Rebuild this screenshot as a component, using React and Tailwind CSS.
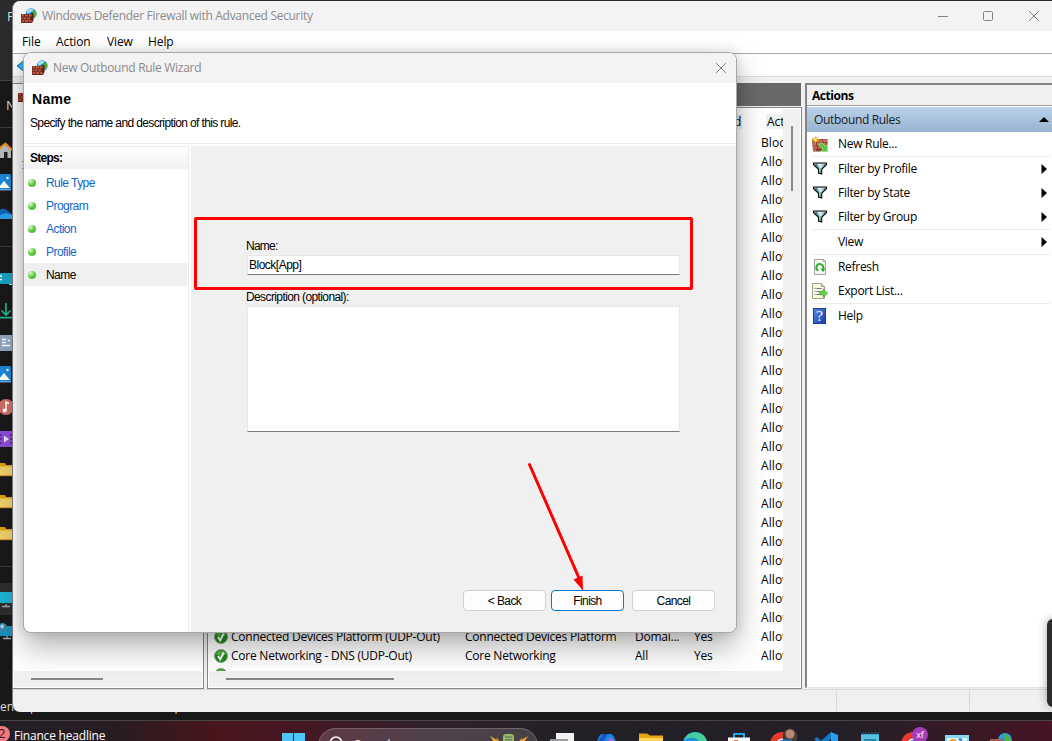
import React from 'react';

const STEPS = ['Rule Type', 'Program', 'Action', 'Profile', 'Name'];

const MENU = [
  { label: 'File', cls: 'w-[34px]' },
  { label: 'Action', cls: 'w-[51px]' },
  { label: 'View', cls: 'w-[41px]' },
  { label: 'Help', cls: 'w-[40px]' },
];

// rows hidden behind the wizard only show their action column
const RULES = Array.from({ length: 29 }, (_, i) => ({
  name: i === 26 ? 'Connected Devices Platform (UDP-Out)' : i === 27 ? 'Core Networking - DNS (UDP-Out)' : '',
  group: i === 26 ? 'Connected Devices Platform' : i === 27 ? 'Core Networking' : '',
  profile: i === 26 ? 'Domai...' : i === 27 ? 'All' : '',
  enabled: i === 26 || i === 27 ? 'Yes' : '',
  action: i === 0 ? 'Block' : i === 28 ? '' : 'Allow',
  check: i > 25,
}));

function FirewallIcon({ className = 'w-4 h-4' }) {
  return (
    <svg className={className} viewBox="0 0 16 16">
      <circle cx="10.200" cy="5.500" r="5.300" fill="#1a86dc" />
      <path d="M6 2.800C7.500.8 10 .2 12.500 1l-.8 2-2 1L8 5.500l-2-.5z" fill="#9fe3f7" />
      <path d="M11.500 2.500l2.500-.3 1.300 2.500v2.500l-2 2.500-1.800-2.500z" fill="#4cae35" />
      <path d="M0 6h9.500l1-1h2v7L11 15H0z" fill="#5e2016" />
      <path d="M.5 6.300h2.800v2.200H.5zM4 6.300h3v2.200H4zM7.700 6.300h3v2.200h-3zM.5 9.200h1.300v2.200H.5zM2.500 9.200h3v2.200h-3zM6.200 9.200h3v2.200h-3zM.5 12.100h2.800v2.200H.5zM4 12.100h3v2.200H4zM7.700 12.100h3v2.200h-3z" fill="#b4543c" />
    </svg>
  );
}

function FilterIcon() {
  return (
    <svg className="w-4 h-4" viewBox="0 0 16 16">
      <path d="M1.500 2h13v1.500L9.700 8.300V13L6.500 12V8.300L1.500 3.500z" fill="#c9cccc" stroke="#000" strokeWidth="1.1" />
      <path d="M2.500 3h4.500l2 5v4l-1.500-.5V8z" fill="#0e8a8a" />
      <path d="M5 3h5.500L8.500 7.500v3.500l-1-.5V7.500z" fill="#dfe3e3" />
      <path d="M12.500 3h1.300L9.500 7.500z" fill="#0e8a8a" />
    </svg>
  );
}

function NewRuleIcon() {
  return (
    <svg className="w-4 h-4" viewBox="0 0 16 16">
      <path d="M0 3h15.500v12.500H1z" fill="#8a3f2f" />
      <path d="M6 3.500h4v2.500H6zM11 3.500h4v2.500h-4zM1 7h3v2.500H1zM5 7h4v2.500H5zM10 7h4v2.500h-4zM1 10.500h4v2H1zM6 10.500h3v2H6zM1 13.300h3v1.700H1z" fill="#c4745c" />
      <path d="M3.500 0l.8 2 2-.9-.9 2 2.100.8-2.100.8.9 2-2-.9-.8 2-.8-2-2 .9.900-2L-.5 3.900l2.100-.8-.9-2 2 .9z" fill="#f9b21b" />
      <circle cx="3.500" cy="3.800" r="1.200" fill="#fff2a0" />
      <path d="M6.500 8.500l3-2 3.700 3.700 2.300-1.700v7H8.500l2.300-2.300z" fill="#58c93f" stroke="#b6ec9e" strokeWidth=".7" />
    </svg>
  );
}

function RefreshIcon() {
  return (
    <svg className="w-4 h-4" viewBox="0 0 16 16">
      <path d="M2.500.5h9l2 2v13h-11z" fill="#f7f7f4" stroke="#a0a49c" />
      <path d="M11.500.5v2h2" fill="none" stroke="#a0a49c" />
      <path d="M6.300 11.700A3.500 3.500 0 1 1 11.300 9v1.500" fill="none" stroke="#2fae2c" strokeWidth="1.900" />
      <path d="M8.500 9.500h5l-2.500 3.700z" fill="#2fae2c" />
    </svg>
  );
}

function ExportIcon() {
  return (
    <svg className="w-4 h-4" viewBox="0 0 16 16">
      <path d="M.5.500h9l3 3v12H.5z" fill="#fbf8e4" stroke="#a39f86" />
      <path d="M9.500.500v3h3" fill="#e3dfc5" stroke="#a39f86" />
      <path d="M2.500 5.500h1m-1 3h1m-1 3h1M4.500 5.500h5m-5 3h3m-3 3h3" stroke="#6b6a88" />
      <path d="M7.500 8.300h3.500V5.700l4.700 4.500-4.700 4.300v-2.600H7.500z" fill="#6ad149" stroke="#3a9d27" strokeWidth=".6" />
    </svg>
  );
}

function HelpIcon() {
  return (
    <span className="w-[13px] h-4 ml-px bg-linear-to-br from-[#5a87e0] to-[#1d3fa8] border border-[#1b3a93] text-white text-[15px] leading-[14px] text-center font-['Liberation_Serif',serif]">?</span>
  );
}

function CheckIcon() {
  return (
    <svg className="w-3.5 h-3.5" viewBox="0 0 14 14">
      <circle cx="7" cy="7" r="6.500" fill="#1f8c1a" stroke="#8a9a86" strokeWidth=".8" />
      <path d="M2 5a5.300 5.300 0 0 1 10 0c-3 2-7 2-10 0z" fill="#4fb53c" />
      <path d="M4 7l2.200 3.300L9.800 3.500" fill="none" stroke="#fff" strokeWidth="1.900" />
    </svg>
  );
}

const ACTIONS = [
  { label: 'New Rule...', icon: <NewRuleIcon />, sep: true },
  { label: 'Filter by Profile', icon: <FilterIcon />, more: true },
  { label: 'Filter by State', icon: <FilterIcon />, more: true },
  { label: 'Filter by Group', icon: <FilterIcon />, more: true, sep: true },
  { label: 'View', more: true, sep: true },
  { label: 'Refresh', icon: <RefreshIcon /> },
  { label: 'Export List...', icon: <ExportIcon />, sep: true },
  { label: 'Help', icon: <HelpIcon /> },
];

// sliver of the explorer sidebar, only the right part of each icon shows
const picture = (
  <>
    <rect x="-4" y="7" width="15" height="16" rx="1" fill="#1b86d8" />
    <path d="M-2 21l6-7 6 7z" fill="#fff" />
    <circle cx="7.500" cy="11" r="1.200" fill="#fff" />
    <rect x="-2" y="22" width="13" height="1.500" fill="#6aa5dc" />
  </>
);
const folder = (
  <>
    <path d="M-4 8h9l1 2h7v11H-4z" fill="#e0a010" />
    <path d="M-4 11.500h16V21H-4z" fill="#edcd6a" />
    <path d="M-4 20.200h16v1H-4z" fill="#c89420" />
  </>
);
const divider = <path d="M0 15.500h12" stroke="#3a3a3a" />;
const SIDEBAR = [
  <>
    <path d="M-1 14l6-5 6 5v9H-1z" fill="#b9b9b9" />
    <path d="M4 17h3.500v6H4z" fill="#222" />
    <path d="M-2 14.500L5.500 8.500l6.500 6.500" fill="none" stroke="#f08a1c" strokeWidth="2" />
  </>,
  picture,
  <>
    <path d="M-2 13a6 6 0 0 1 10-1l4 3v4H-2z" fill="#0f63b8" />
    <path d="M-2 17l8-3 6 2v4H-2z" fill="#28a0ea" />
  </>,
  divider,
  <>
    <rect x="-2" y="10" width="14" height="11" fill="#1ba0bf" />
    <path d="M0 13h2m-2 3.500h2" stroke="#fff" strokeWidth="1.500" />
    <path d="M9 21.500h3" stroke="#9fe1ee" />
  </>,
  <path d="M6 8v12M1.500 15.500L6 20l4.500-4.500M0 22.700h12" fill="none" stroke="#22b58a" strokeWidth="1.700" />,
  <>
    <rect x="-2" y="8" width="14" height="16" fill="#8fa4bd" />
    <path d="M2 12.500h4m-4 3h4m-4 3h8M7.500 13.500H10" stroke="#fff" strokeWidth="1.500" />
  </>,
  picture,
  <>
    <circle cx="6" cy="16" r="8" fill="#cf6a62" />
    <path d="M6 19.500V11l3 1.500" fill="none" stroke="#fff" strokeWidth="1.500" />
    <circle cx="4.700" cy="19.500" r="2" fill="#fff" />
  </>,
  <>
    <rect x="-2" y="8" width="14" height="16" fill="#8c4bd8" />
    <path d="M0 12h1.500m-1.500 4h1.500m-1.500 4h1.500m8.500-8h2m-2 4h2m-2 4h2" stroke="#40206e" strokeWidth="1.500" />
    <path d="M4 12.500v7l5-3.500z" fill="#e8e0f4" />
  </>,
  folder,
  folder,
  folder,
  divider,
  <>
    <rect x="-1" y="0" width="14" height="32" fill="#2d2d2d" />
    <rect x="-2" y="9" width="14" height="11" fill="#1fb0d2" />
    <path d="M6 21v2M2 23.500h8" stroke="#9aa4ac" strokeWidth="1.300" />
  </>,
  <>
    <rect x="-1" y="11" width="13" height="10" fill="#1790bd" />
    <circle cx="2.500" cy="12.500" r="4.500" fill="#3c82a8" />
    <path d="M0 11l3-2 1 3-2 2z" fill="#a4d5e8" />
    <path d="M7 21v2M3 23.500h8" stroke="#9aa4ac" strokeWidth="1.300" />
  </>,
];

const chrome = (
  <>
    <circle cx="12" cy="12" r="12" fill="#e33b2e" />
    <path d="M0 9a12 12 0 0 0 8 14l4-8z" fill="#2f9e44" />
    <circle cx="12" cy="12" r="5.500" fill="#fff" />
    <circle cx="12" cy="12" r="4.300" fill="#3b7de8" />
  </>
);
const TASKBAR = [
  <><rect x="4" y="1" width="18" height="16" fill="#f2f2f2" /><rect x="-2" y="7" width="18" height="14" fill="#9a9a9a" /></>,
  <><path d="M0 14C2 5 4 2 7 2h7c4 0 5 5 8 14z" fill="#1b87e0" /><path d="M12 6c5 0 8 3 10 8l-8-2z" fill="#b066e6" /><path d="M2 9h6l4-7h-5z" fill="#1557c8" /></>,
  <><path d="M0 1.500h8l3 2h13V22H0z" fill="#e9a510" /><path d="M0 6h24v14H0z" fill="#ffd55e" /></>,
  <><circle cx="12" cy="12.500" r="12.500" fill="#1b8fd8" /><path d="M1 8C5-2 20-3 24 9l-6 4C15 4 8 5 1 8z" fill="#47cf9b" /></>,
  <><path d="M7 6V2h10v4" fill="none" stroke="#22a5ea" strokeWidth="2" /><rect x="1" y="5.500" width="22" height="16" fill="#f7f9fb" /><path d="M7 8h4v3H7z" fill="#e85b3b" /></>,
  <>{chrome}<circle cx="20" cy="4" r="7.500" fill="#4a3b38" /><circle cx="20" cy="2" r="4.500" fill="#b98a73" /><path d="M13 7h9v6h-9z" fill="#1b6b96" /></>,
  <><path d="M17 0l7 3v20l-7-3z" fill="#2a9df0" /><path d="M0 7l3-2 14 13v5zM17 0L0 15l3 3L17 7z" fill="#1479c4" /></>,
  <><rect x="3" y="2" width="18" height="22" fill="#56c3e4" /><path d="M5 0v3m3-3v3m3-3v3m3-3v3m3-3v3m3-3v3" stroke="#1f6b86" /><path d="M6 8h12" stroke="#1a6f94" strokeWidth="1.500" /></>,
  <>{chrome}<circle cx="19" cy="3" r="8" fill="#a53dbb" /><text x="19" y="6" textAnchor="middle" fontSize="9" fill="#fff">xf</text></>,
  <><rect x="0" y="3" width="24" height="20" fill="#8bd5f4" /><rect x="2" y="6" width="20" height="16" fill="#d9f2fc" /><circle cx="8" cy="11" r="4" fill="#f29a1f" /><path d="M14 10h6M14 7l3 1" stroke="#1b78c9" strokeWidth="2" /></>,
  <><circle cx="16" cy="8" r="7" fill="#2a9ee0" /><path d="M15 2l5 2 2 5-6 1z" fill="#52b43a" /><path d="M1 7h14v14H1z" fill="#a85f46" /></>,
];

function Close() {
  return (
    <svg className="w-3 h-3" viewBox="0 0 12 12">
      <path d="M1 1l10 10M11 1L1 11" stroke="#848484" strokeWidth="1" />
    </svg>
  );
}

function WizardButton({ label, primary, width }) {
  return (
    <button className={`${width} h-[21px] rounded-[4px] bg-[#fdfdfd] border ${primary ? 'border-[#0078d4]' : 'border-[#d0d0d0]'} text-[12px] leading-[14px] pt-px tracking-[-0.6px]`}>
      {label}
    </button>
  );
}

function Wizard() {
  return (
    <div className="absolute left-[23px] top-[52px] w-[714px] h-[581px] rounded-lg border border-[#a6a6a6] bg-white overflow-hidden flex flex-col [box-shadow:0_14px_30px_rgba(0,0,0,0.3),0_0_12px_rgba(0,0,0,0.12)] font-['Liberation_Sans',sans-serif]">
      <div className="h-[30px] shrink-0 bg-[#f3f3f3] flex items-center pb-px pl-2 pr-[9px]">
        <FirewallIcon />
        <span className="ml-[5px] mt-px flex-1 text-[12px] tracking-[-0.29px] text-[#8b8b8b] font-['Open_Sans',sans-serif]">New Outbound Rule Wizard</span>
        <Close />
      </div>
      <div className="h-[61px] shrink-0 border-b border-[#ececec] pt-[7px]">
        <h1 className="pl-2 text-[14px] leading-[18px] font-bold tracking-[0.3px]">Name</h1>
        <p className="pl-1.5 pt-[8px] text-[12px] leading-[15px] tracking-[-0.63px]">Specify the name and description of this rule.</p>
      </div>
      <div className="flex-1 flex pt-[2px]">
        <div className="w-[165px] border-r border-[#ebebeb]">
          <div className="h-[23px] border-t border-[#ebebeb] bg-linear-to-b from-white to-[#f1f1f1] pl-1.5 text-[12px] leading-[22px] font-bold tracking-[-0.75px]">Steps:</div>
          <div className="pt-[2px]">
            {STEPS.map((s, i) => (
              <div key={s} className={`h-[23px] w-[163px] flex items-center pt-px pl-[4px] text-[12px] tracking-[-0.55px] ${i === 4 ? 'bg-[#efefef] text-black' : 'text-[#0f66cc]'}`}>
                <span className="w-2 h-2 rounded-full bg-[radial-gradient(circle_at_30%_25%,#e4f7d8,#5cc93a_50%,#4aac35)]" />
                <span className="ml-[10px]">{s}</span>
              </div>
            ))}
          </div>
        </div>
        <div className="flex-1 ml-[2px] bg-[#f0f0f0] flex flex-col pl-[55px] pr-[21px] pt-[91px] text-[12px] tracking-[-0.75px]">
          <label className="h-[18px] leading-[18px]">Name:</label>
          <div className="ml-px w-[433px] h-[20px] bg-white border border-[#e7e7e7] border-b-[#7a7a7a] pl-px leading-[18px] tracking-[-0.5px]">Block[App]</div>
          <label className="mt-[13px] h-[18px] leading-[18px] tracking-[-0.61px]">Description (optional):</label>
          <div className="ml-px w-[433px] h-[126px] bg-white border border-[#e7e7e7] border-b-[#7a7a7a]" />
          <div className="mt-auto mb-[21px] flex justify-end gap-[5px]">
            <WizardButton label="< Back" width="w-[83px]" />
            <WizardButton label="Finish" width="w-[73px]" primary />
            <WizardButton label="Cancel" width="w-[83px] ml-[3px]" />
          </div>
        </div>
      </div>
    </div>
  );
}

function RulesPane() {
  return (
    <div className="w-[595px] flex flex-col">
      <div className="h-[23px] mr-px bg-[#696969]" />
      <div className="h-[582px] mt-px border border-[#828790] bg-white p-px flex flex-col">
        <div className="flex-1 min-h-0 flex">
          <div className="w-[574px] shrink-0 overflow-hidden">
            <div className="h-[24px] flex items-center text-[12px]">
              <span className="ml-[518px] shrink-0 w-[15px] pl-[7px] h-[15px] leading-[15px] bg-[#f0f0f0]">d</span>
              <span className="ml-[24px] pl-px w-[17px] shrink-0 overflow-hidden h-[15px] leading-[15px] tracking-[-0.1px] bg-[#f0f0f0]">Action</span>
            </div>
            {RULES.map((r, i) => (
              <div key={i} className="h-[19px] flex items-center text-[12px] whitespace-nowrap tracking-[-0.24px]">
                <div className="w-[22px] shrink-0 pl-[5px]">{r.check && <CheckIcon />}</div>
                <span className="w-[234px] shrink-0">{r.name}</span>
                <span className="w-[170px] shrink-0">{r.group}</span>
                <span className="w-[59px] shrink-0">{r.profile}</span>
                <span className="w-[67px] shrink-0">{r.enabled}</span>
                <span className="w-[22px] shrink-0 overflow-hidden tracking-[0.1px]">{r.action}</span>
              </div>
            ))}
          </div>
          <div className="flex-1 bg-[#f0f0f0] pt-[17px] pl-[8px]">
            <div className="w-[2px] h-[65px] bg-[#8a8a8a]" />
          </div>
        </div>
        <div className="h-4 shrink-0 bg-[#f0f0f0] pt-[7px] pl-[17px]">
          <div className="w-[168px] h-[2px] bg-[#858585]" />
        </div>
      </div>
    </div>
  );
}

function ActionsPane() {
  return (
    <div className="flex-1 border-t-2 border-l-2 border-[#858585] border-b border-b-[#e3e3e3] bg-white mb-px text-[12px]">
      <div className="h-[21px] bg-[#f0f0f0] border-b border-[#a0a0a0] pl-[5px] leading-[22px] font-bold tracking-[-0.45px]">Actions</div>
      <div className="mt-px h-[25px] bg-linear-to-b from-[#b9d1ea] to-[#99b4d1] pl-[7px] pr-[3px] flex items-center justify-between text-[#1a1a1a]">
        <span className="tracking-[-0.33px]">Outbound Rules</span>
        <svg className="w-[10px] h-[5px]" viewBox="0 0 10 5"><path d="M0 5l5-5 5 5z" /></svg>
      </div>
      <div className="pl-[5px] pr-[2px]">
        {ACTIONS.map((a) => (
          <div key={a.label} className={`flex items-center ${a.sep ? 'h-[25px] border-b border-[#ececec]' : 'h-[24px]'}`}>
            <div className="w-[26px] flex shrink-0">{a.icon}</div>
            <span className="flex-1 tracking-[-0.29px]">{a.label}</span>
            {a.more && <svg className="w-[6px] h-[10px] mr-[3px] mb-px" viewBox="0 0 6 10"><path d="M.5 0L6 5 .5 10z" /></svg>}
          </div>
        ))}
      </div>
    </div>
  );
}

function FirewallWindow() {
  return (
    <div className="absolute left-[12px] top-px w-[1040px] h-[711px] rounded-l-lg bg-[#f0f0f0] overflow-hidden flex flex-col border-l border-[#7d7d82]">
      <div className="h-[30px] shrink-0 bg-[#f3f3f3] flex items-center pb-px pl-2 pr-3 text-[12px] text-[#8b8b8b]">
        <FirewallIcon />
        <span className="ml-[5px] mt-px flex-1 tracking-[-0.31px]">Windows Defender Firewall with Advanced Security</span>
        <svg className="w-2.5 h-2.5" viewBox="0 0 10 10"><path d="M0 5.500h10" stroke="#848484" /></svg>
        <svg className="w-2.5 h-2.5 ml-[35px] mr-[35px]" viewBox="0 0 10 10"><rect x=".5" y=".5" width="9" height="9" rx="1" fill="none" stroke="#848484" /></svg>
        <Close />
      </div>
      <div className="h-[22px] shrink-0 bg-white flex items-center pl-[9px] text-[12px] tracking-[-0.1px]">
        {MENU.map((m) => <span key={m.label} className={m.cls}>{m.label}</span>)}
      </div>
      <div className="h-[24px] shrink-0 bg-white border-y border-t-[#a9a9b4] border-b-[#dcdcdc] flex items-center pt-px pl-1">
        <svg className="w-3 h-3.5" viewBox="0 0 12 14"><path d="M0 7l9-7v14z" fill="#38b0ec" stroke="#1c6d9e" /></svg>
      </div>
      <div className="h-[612px] shrink-0 pt-[6px] flex">
        <div className="w-[191px] mr-[3px] border border-[#828790] border-l-0 bg-white flex flex-col">
          <div className="pl-[5px] pt-[3px] h-[76px]"><FirewallIcon /></div>
          <svg className="w-3 h-3 ml-[9px]" viewBox="0 0 12 12"><path d="M0 1l4 4-4 4" fill="none" stroke="#8a8a8a" /></svg>
          <div className="mt-auto mb-px mx-px h-4 bg-[#f0f0f0] pt-[7px] pl-[17px]">
            <div className="w-[72px] h-[2px] bg-[#858585]" />
          </div>
        </div>
        <RulesPane />
        <div className="w-[3px]" />
        <ActionsPane />
      </div>
      <div className="flex-1 border-t border-[#d7d7d7] pt-px pb-px flex">
        <div className="w-[824px] border-r border-[#d7d7d7]" />
        <div className="w-[133px] border-r border-[#d7d7d7]" />
      </div>
    </div>
  );
}

function Taskbar() {
  return (
    <div className="h-[21px] shrink-0 border-t border-[#4a4648] flex overflow-hidden bg-[linear-gradient(90deg,#231f26_0px,#281c22_120px,#48151a_215px,#451722_300px,#30202c_430px,#232026_560px,#241f27_850px,#461423_1052px)] text-white text-[12px]">
      <div className="w-[282px] shrink-0 flex">
        <span className="w-4 h-4 mt-[5px] -ml-1.5 rounded-full bg-[#f2777f] text-[#321517] text-[12px] leading-4 text-center">2</span>
        <span className="ml-1 mt-1.5 leading-[18px] tracking-[-0.2px]">Finance headline</span>
      </div>
      <svg className="w-6 h-6 mt-3 shrink-0" viewBox="0 0 24 24">
        <path d="M0 0h11v11H0zM12 0h11v11H12zM0 12h11v11H0zM12 12h11v11H12z" fill="#4fc5f7" />
      </svg>
      <div className="w-[220px] h-9 mt-[7px] ml-[12px] shrink-0 rounded-full border border-white/20 bg-white/15 flex pl-[10px]">
        <svg className="w-4 h-4 mt-[6px]" viewBox="0 0 16 16"><circle cx="7" cy="7.500" r="5.500" fill="none" stroke="#fff" strokeWidth="1.500" /></svg>
        <span className="ml-[9px] mt-[5px] leading-5 text-[13px] text-white/85">Search</span>
        <svg className="w-10 h-6 ml-auto mr-[8px] mt-[3px]" viewBox="0 0 40 24">
          <path d="M1 4l7 4-1-3 7 9H8l2 4zM39 4l-7 4 1-3-6 9h5l-2 4z" fill="#f0a62c" />
          <rect x="14" y="2" width="11" height="18" rx="3" fill="#9ab75c" />
          <path d="M16 5h7M16 8h7" stroke="#4b6187" />
        </svg>
      </div>
      <div className="flex ml-[4px] mt-[11px]">
        {TASKBAR.map((icon, i) => (
          <div key={i} className="w-[43.700px] flex justify-center">
            <svg className="w-6 h-6 overflow-visible" viewBox="0 0 24 24">{icon}</svg>
          </div>
        ))}
      </div>
    </div>
  );
}

export default function App() {
  return (
    <main className="relative w-[1052px] h-[741px] overflow-hidden bg-[#191919] flex flex-col font-['Open_Sans','Noto_Sans',sans-serif] text-black">
      <div className="h-[720px] shrink-0 flex flex-col text-[13px] text-[#d8d8d8]">
        <div className="h-[81px] shrink-0 bg-[#2b2b2b] border-b border-[#444] pl-[7px] pt-[7px] leading-[18px]">P</div>
        <div className="h-[47px] shrink-0 border-b border-[#3d3d3d] pl-1.5 pt-[15px] leading-[18px]">N</div>
        <div className="w-3 mt-[7px] flex flex-col">
          {SIDEBAR.map((icon, i) => (
            <svg key={i} className="w-3 h-8" viewBox="0 0 12 32">{icon}</svg>
          ))}
        </div>
        <div className="mt-auto mb-1 leading-[18px] text-[12px]">en<span className="ml-4">p</span><span className="ml-[137px]">p</span></div>
      </div>
      <Taskbar />
      <FirewallWindow />
      <Wizard />
      {/* highlight and pointer */}
      <div className="absolute left-[194px] top-[217px] w-[499px] h-[73px] border-3 border-[#fe0000] rounded-[2px]" />
      <svg className="absolute left-[520px] top-[455px] w-[80px] h-[140px]" viewBox="0 0 80 140">
        <path d="M9.500 9.500L59 123" stroke="#fe0000" strokeWidth="3" strokeLinecap="round" />
        <path d="M63 135.500L53.500 124.500l9-4z" fill="#fe0000" />
      </svg>
      <div className="absolute left-[1047px] top-[619px] w-3 h-[88px] rounded-lg bg-[#2c2c2c] [box-shadow:0_0_10px_rgba(0,0,0,0.35)]" />
    </main>
  );
}
